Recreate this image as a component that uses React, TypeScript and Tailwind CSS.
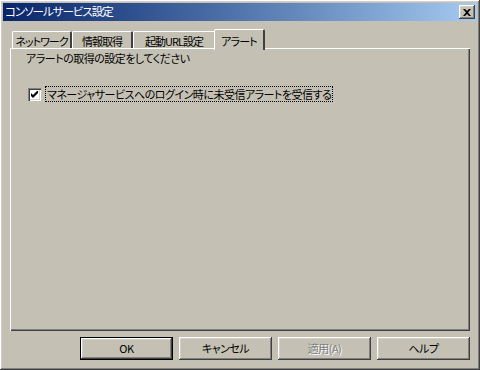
import React from 'react';

const font = "font-['MS_UI_Gothic','Noto_Sans_CJK_JP',sans-serif] [font-feature-settings:'palt'] text-[11px] tracking-[-0.5px]";

const raised =
  'shadow-[inset_-1px_-1px_#404040,inset_1px_1px_#ffffff,inset_-2px_-2px_#808080,inset_2px_2px_#d4d0c8]';

function Tab({ label, width, active }: { label: string; width: number; active?: boolean }) {
  if (active) {
    return (
      <div
        style={{ width }}
        className="relative z-10 shrink-0 -mb-[2px] h-[21px] -mx-[2px] flex items-start justify-center pt-[3px] whitespace-nowrap tracking-[-0.8px] bg-[#c4c0b4] border-t border-l border-white border-r-2 border-r-[#404040] rounded-t-[2px] text-black"
      >
        {label}
      </div>
    );
  }
  return (
    <div
      style={{ width }}
      className="shrink-0 h-[17px] flex items-start justify-center pt-[1px] whitespace-nowrap tracking-[-1px] bg-[#c4c0b4] border-t border-l border-white border-r-2 border-r-[#404040] rounded-t-[2px] text-black"
    >
      {label}
    </div>
  );
}

function Button({ label, isDefault, disabled }: { label: string; isDefault?: boolean; disabled?: boolean }) {
  return (
    <div
      className={`w-[93px] h-[23px] flex items-center justify-center bg-[#c4c0b4] ${
        isDefault ? 'border border-black' : ''
      }`}
    >
      <div className={`w-full h-full flex items-center justify-center ${raised}`}>
        <span className={disabled ? 'text-[#808080] [text-shadow:1px_1px_#ffffff]' : 'text-black'}>{label}</span>
      </div>
    </div>
  );
}

export default function App() {
  return (
    <div className={`w-[480px] h-[370px] bg-[#c4c0b4] p-[3px] flex flex-col ${raised} ${font}`}>
      <div className="h-[18px] flex items-center justify-between pl-[2px] pr-[2px] bg-gradient-to-r from-[#0a246a] to-[#a6caf0]">
        <span className="text-white text-[11.5px] tracking-[-1px] leading-none">コンソールサービス設定</span>
        <div className={`w-[16px] h-[14px] bg-[#c4c0b4] flex items-center justify-center ${raised}`}>
          <svg width="8" height="7" viewBox="0 0 8 7">
            <path d="M0 0h2l2 2 2-2h2L5 3.5 8 7H6L4 5 2 7H0l3-3.5z" fill="#000" />
          </svg>
        </div>
      </div>

      <div className="flex flex-col px-[7px] pt-[8px]">
        <div className="flex items-end pl-[2px] h-[19px]">
          <Tab label="ネットワーク" width={60} />
          <Tab label="情報取得" width={61} />
          <Tab label="起動URL設定" width={83} />
          <Tab label="アラート" width={51} active />
        </div>
        <div className="h-[283px] border-t border-l border-white shadow-[inset_-1px_-1px_#404040,inset_-2px_-2px_#808080] pl-[15px] pt-[2px] text-black">
          <div className="leading-[14px]">アラートの取得の設定をしてください</div>
          <div className="flex items-center mt-[22px] ml-[2px] gap-[5px]">
            <div className="w-[13px] h-[13px] bg-white shadow-[inset_1px_1px_#808080,inset_2px_2px_#404040,inset_-1px_-1px_#ffffff,inset_-2px_-2px_#d4d0c8] flex items-center justify-center">
              <svg width="7" height="7" viewBox="0 0 7 7">
                <path d="M0 2v3l2 2 5-5V-1L2 4z" fill="#000" />
              </svg>
            </div>
            <span className="px-[1px] leading-[14px] whitespace-nowrap outline outline-1 outline-dotted outline-black">
              マネージャサービスへのログイン時に未受信アラートを受信する
            </span>
          </div>
        </div>
      </div>

      <div className="flex justify-end gap-[6px] pr-[7px] mt-[6px]">
        <Button label="OK" isDefault />
        <Button label="キャンセル" />
        <Button label="適用(A)" disabled />
        <Button label="ヘルプ" />
      </div>
    </div>
  );
}
